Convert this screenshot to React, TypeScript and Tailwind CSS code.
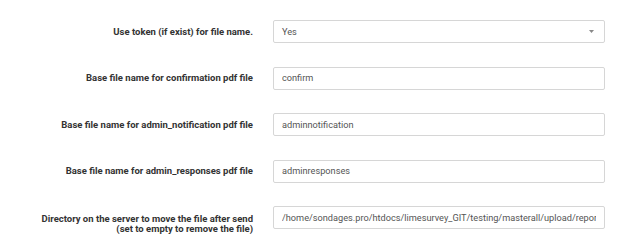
const rows: { label: string[]; value: string; select?: boolean }[] = [
  { label: ["Use token (if exist) for file name."], value: "Yes", select: true },
  { label: ["Base file name for confirmation pdf file"], value: "confirm" },
  { label: ["Base file name for admin_notification pdf file"], value: "adminnotification" },
  { label: ["Base file name for admin_responses pdf file"], value: "adminresponses" },
  {
    label: ["Directory on the server to move the file after send", "(set to empty to remove the file)"],
    value: "/home/sondages.pro/htdocs/limesurvey_GIT/testing/masterall/upload/reports",
  },
];

export default function App() {
  return (
    <div className="w-[640px] h-[243px] bg-white overflow-hidden font-['Roboto',sans-serif]">
      <div className="flex flex-col gap-[23.5px] pt-[20px]">
        {rows.map((r, i) => (
          <div key={i} className="flex items-start">
            <div
              className={
                r.label.length > 1
                  ? "w-[253px] text-right pt-[7.5px] text-[9.5px] leading-[10.5px] font-bold text-[#333]"
                  : "w-[253px] text-right pt-[5.5px] text-[9.5px] leading-[11px] font-bold text-[#333]"
              }
            >
              {r.label.map((l, j) => (
                <div key={j}>{l}</div>
              ))}
            </div>
            <div className="ml-[20px] w-[332px] h-[23px] border border-[#d6d6d6] rounded-[2px] flex items-center pl-[8px] pr-[8px] text-[9.2px] text-[#555]">
              {r.select ? (
                <>
                  <span className="flex-1">{r.value}</span>
                  <svg width="5" height="3" viewBox="0 0 5 3" className="shrink-0 mr-[2px]">
                    <path d="M0 0 L5 0 L2.5 3 Z" fill="#888" />
                  </svg>
                </>
              ) : (
                <input
                  readOnly
                  value={r.value}
                  className="flex-1 min-w-0 bg-transparent outline-none text-[#555]"
                />
              )}
            </div>
          </div>
        ))}
      </div>
    </div>
  );
}
